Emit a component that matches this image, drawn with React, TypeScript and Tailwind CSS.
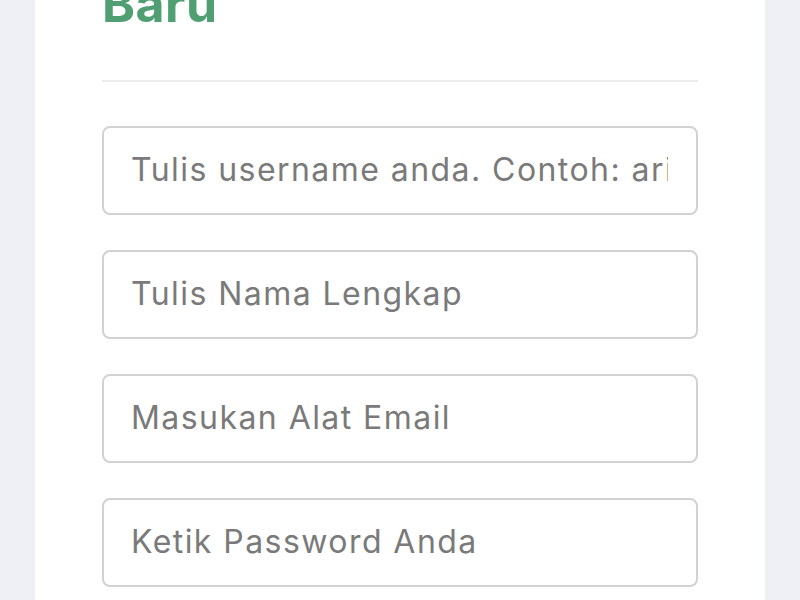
import React from "react";

export default function App() {
  const fields = [
    "Tulis username anda. Contoh: arif123",
    "Tulis Nama Lengkap",
    "Masukan Alat Email",
    "Ketik Password Anda",
  ];
  return (
    <div
      className="w-[800px] h-[600px] overflow-hidden bg-[#eff0f5] flex justify-center"
      style={{ fontFamily: "Inter, 'Noto Sans', sans-serif" }}
    >
      <div className="w-[730px] bg-white px-[67px] h-full">
        <h1 className="mt-[-26px] text-[50px] leading-[60px] font-bold tracking-[0.01em] text-[#4f9f73]">
          Baru
        </h1>
        <div className="mt-[46px] h-[2px] bg-[#ececec]" />
        <div className="mt-[44px] flex flex-col gap-[35px]">
          {fields.map((f) => (
            <input
              key={f}
              placeholder={f}
              className="h-[89px] w-full rounded-[8px] border-2 border-[#d2d2d2] pl-[27px] pr-[28px] pb-[3px] text-[32px] tracking-[0.045em] text-[#757575] placeholder:text-[#7a7a7a] outline-none"
            />
          ))}
        </div>
      </div>
    </div>
  );
}
